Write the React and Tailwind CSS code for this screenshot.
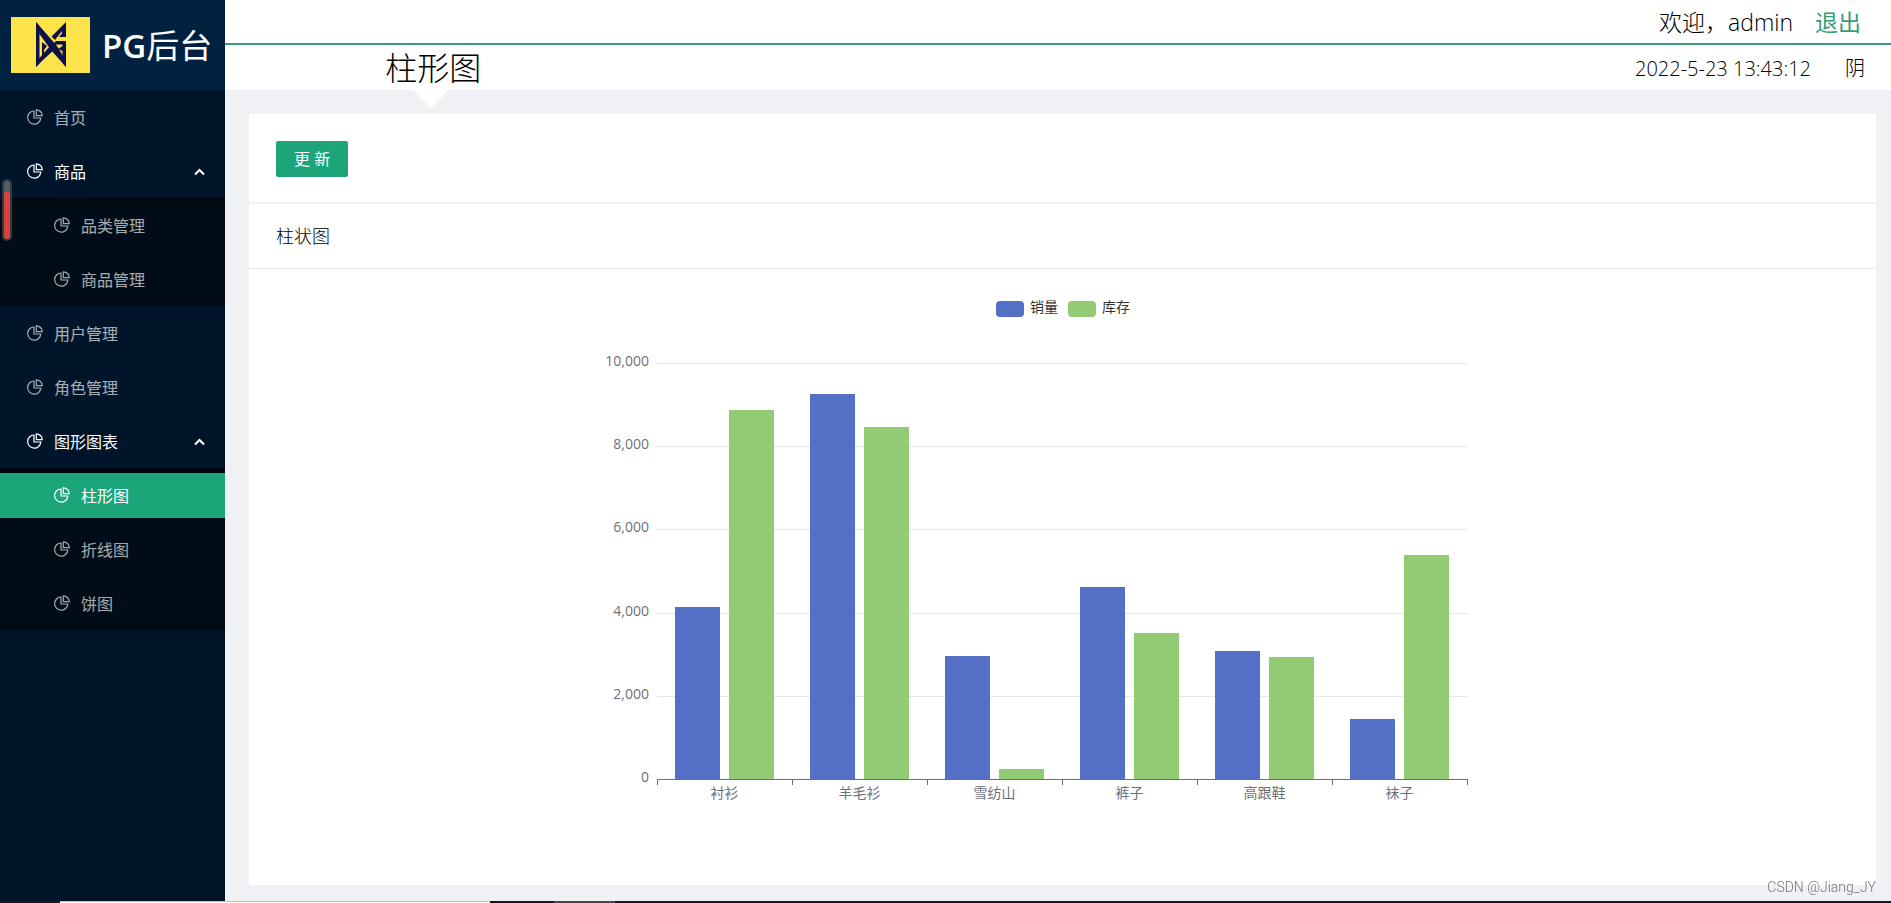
import { useState } from "react";
import clsx from "clsx";

const MENU = [
  { key: "home", title: "首页" },
  {
    key: "products",
    title: "商品",
    children: [
      { key: "category", title: "品类管理" },
      { key: "product", title: "商品管理" },
    ],
  },
  { key: "user", title: "用户管理" },
  { key: "role", title: "角色管理" },
  {
    key: "charts",
    title: "图形图表",
    children: [
      { key: "bar", title: "柱形图" },
      { key: "line", title: "折线图" },
      { key: "pie", title: "饼图" },
    ],
  },
];

const SALES = [4144, 9250, 2957, 4615, 3077, 1432];
const STORES = [8863, 8454, 233, 3510, 2940, 5375];
const NAMES = ["衬衫", "羊毛衫", "雪纺山", "裤子", "高跟鞋", "袜子"];
const TICKS = [0, 2000, 4000, 6000, 8000, 10000];

// chart geometry
const GRID = { left: 101, top: 67, width: 810, height: 416 };
const STEP = GRID.width / NAMES.length;
const BASE = GRID.top + GRID.height;

function yOf(value) {
  return Math.round(BASE - (value / 10000) * GRID.height);
}

function Logo() {
  return (
    <svg viewBox="0 0 79 56" className="h-14 w-[79px] shrink-0 bg-[#fee34a]" aria-hidden="true">
      <g fill="#0d1149">
        <path d="M25 5 L28.5 9 V46 L25 50 Z" />
        <path d="M25 5 L46 29 L55 44 V50 L40 33 L27 15 Z" />
        <path d="M25 50 V45 L39 29 L43 33 L32 43 Z" />
        <path d="M31 25 L36 29 L33 33 V37 L31 39 Z" />
        <path d="M55 5 V20 H48 L51 16.5 V14 L44 23 L40.5 19.5 Z" />
        <path d="M45 24 H55 V50 L51.5 46 V34 L47 32 L51.5 29 V27.5 H45 L42 30 L41 28 Z" />
      </g>
    </svg>
  );
}

function PieIcon() {
  return (
    <svg
      viewBox="0 0 16 16"
      className="-mt-0.5 size-4 shrink-0"
      fill="none"
      stroke="currentColor"
      strokeWidth="1.2"
      aria-hidden="true"
    >
      <path d="M7 2 A6.6 6.6 0 1 0 13.8 9 H7 Z" />
      <path d="M9.3 0.8 V6.7 H15.3 A6 6 0 0 0 9.3 0.8 Z" />
    </svg>
  );
}

function MenuLink({ item, nested, active, onSelect }) {
  return (
    <li className="pt-[5px] pb-1">
      <a
        href={`#${item.key}`}
        onClick={() => onSelect(item)}
        className={clsx(
          "flex h-[45px] items-center gap-[11px]",
          nested ? "pl-[54px]" : "pl-[27px]",
          active ? "bg-[#1da57a] text-white" : "text-white/65 hover:text-white"
        )}
      >
        <PieIcon />
        <span>{item.title}</span>
      </a>
    </li>
  );
}

function SubMenu({ item, open, selected, onToggle, onSelect }) {
  return (
    <li>
      <div className="pt-[5px] pb-1">
        <button
          type="button"
          aria-expanded={open}
          onClick={() => onToggle(item.key)}
          className="flex h-[45px] w-full items-center gap-[11px] pr-5 pl-[27px] text-white"
        >
          <PieIcon />
          <span>{item.title}</span>
          <svg
            viewBox="0 0 11 8"
            className={clsx("ml-auto h-2 w-[11px]", !open && "rotate-180")}
            fill="none"
            stroke="currentColor"
            strokeWidth="2"
            aria-hidden="true"
          >
            <path d="M1 6.5 L5.5 2 L10 6.5" />
          </svg>
        </button>
      </div>
      {open && (
        <ul className="bg-[#000c17] shadow-[inset_0_8px_6px_-6px_rgba(0,0,0,0.45),inset_0_-6px_6px_-6px_rgba(0,0,0,0.45)]">
          {item.children.map((child) => (
            <MenuLink
              key={child.key}
              item={child}
              nested
              active={selected === child.key}
              onSelect={onSelect}
            />
          ))}
        </ul>
      )}
    </li>
  );
}

function BarChart({ sales, stores }) {
  return (
    <svg
      viewBox="0 0 1013 551"
      className="w-full max-w-[1013px]"
      role="img"
      aria-label="柱状图"
      fontSize="14"
    >
      <rect x="440" y="5" width="28" height="16" rx="4" fill="#5470c6" />
      <text x="474" y="16" fill="#333">销量</text>
      <rect x="512" y="5" width="28" height="16" rx="4" fill="#91cc75" />
      <text x="546" y="16" fill="#333">库存</text>

      {TICKS.map((tick) => (
        <g key={tick}>
          {tick > 0 && (
            <path
              d={`M${GRID.left} ${yOf(tick) + 0.5} h${GRID.width + 1}`}
              stroke="#e5e7ee"
            />
          )}
          <text x={GRID.left - 8} y={yOf(tick) + 3} textAnchor="end" fill="#6e7079">
            {tick.toLocaleString("en-US")}
          </text>
        </g>
      ))}

      {NAMES.map((name, i) => {
        const x = GRID.left + i * STEP;
        return (
          <g key={name}>
            <rect x={x + 18} y={yOf(sales[i])} width="45" height={BASE - yOf(sales[i])} fill="#5470c6" />
            <rect x={x + 72} y={yOf(stores[i])} width="45" height={BASE - yOf(stores[i])} fill="#91cc75" />
            <text x={x + STEP / 2} y={BASE + 19} textAnchor="middle" fill="#6e7079">
              {name}
            </text>
          </g>
        );
      })}

      <g stroke="#6e7079" fill="none">
        <path d={`M${GRID.left} ${BASE + 0.5} h${GRID.width + 1}`} />
        {[...NAMES, "end"].map((name, i) => (
          <path key={name} d={`M${GRID.left + i * STEP + 0.5} ${BASE} v6`} />
        ))}
      </g>
    </svg>
  );
}

export default function App() {
  const [selected, setSelected] = useState("bar");
  const [title, setTitle] = useState("柱形图");
  const [openKeys, setOpenKeys] = useState(["products", "charts"]);
  const [sales, setSales] = useState(SALES);
  const [stores, setStores] = useState(STORES);

  function handleSelect(item) {
    setSelected(item.key);
    setTitle(item.title);
  }

  function handleToggle(key) {
    setOpenKeys((keys) =>
      keys.includes(key) ? keys.filter((k) => k !== key) : [...keys, key]
    );
  }

  function update() {
    setSales((values) => values.map((v) => Math.min(v + 100, 10000)));
    setStores((values) => values.map((v) => Math.max(v - 100, 0)));
  }

  return (
    <div className="flex h-screen flex-col font-['Open_Sans','Noto_Sans_CJK_SC',sans-serif] text-base text-black/85">
      <div className="flex min-h-0 flex-1">
        <aside className="w-[225px] shrink-0 overflow-hidden bg-[#001529]">
          <a href="#home" className="flex h-[90px] items-center gap-3 bg-[#002140] pl-[11px] text-white">
            <Logo />
            <h1 className="text-[33px] leading-none whitespace-nowrap">
              <span className="font-semibold">PG</span>后台
            </h1>
          </a>
          <nav>
            <ul>
              {MENU.map((item) =>
                item.children ? (
                  <SubMenu
                    key={item.key}
                    item={item}
                    open={openKeys.includes(item.key)}
                    selected={selected}
                    onToggle={handleToggle}
                    onSelect={handleSelect}
                  />
                ) : (
                  <MenuLink
                    key={item.key}
                    item={item}
                    active={selected === item.key}
                    onSelect={handleSelect}
                  />
                )
              )}
            </ul>
          </nav>
        </aside>

        <div className="flex min-w-0 flex-1 flex-col bg-[#f0f1f5]">
          <header className="h-[90px] bg-white font-light text-black">
            <div className="flex h-[45px] items-center justify-end gap-[22px] border-b-2 border-[#3a9c7b] pt-0.5 pr-[30px] text-[23px] leading-none">
              <span>欢迎，admin</span>
              <button type="button" className="font-normal text-[#3a9c7b]">退出</button>
            </div>
            <div className="flex h-[45px] items-center">
              <div className="relative flex h-full w-1/4 items-center justify-center text-[32px] leading-none">
                <h2>{title}</h2>
                <span className="absolute top-full left-1/2 -ml-5 border-x-[18px] border-t-[18px] border-x-transparent border-t-white" />
              </div>
              <div className="flex flex-1 justify-end gap-[34px] pt-0.5 pr-[26px] text-xl">
                <span>2022-5-23 13:43:12</span>
                <span>阴</span>
              </div>
            </div>
          </header>

          <main className="flex min-h-0 flex-1 flex-col pt-6 pr-[15px] pb-4 pl-6">
            <section className="mb-0.5 bg-white px-[27px] pt-[27px] pb-[25px]">
              <button
                type="button"
                onClick={update}
                className="h-9 rounded-xs bg-[#1da57a] px-[18px] leading-none text-white"
              >
                更 新
              </button>
            </section>
            <section className="flex min-h-0 flex-1 flex-col bg-white">
              <h3 className="flex h-[65px] items-center border-b border-[#e8e8e8] px-[27px] text-lg font-light text-black">
                柱状图
              </h3>
              <div className="flex justify-center px-[27px] pt-[27px]">
                <BarChart sales={sales} stores={stores} />
              </div>
            </section>
          </main>
        </div>
      </div>

      <div className="flex h-0.5 shrink-0 bg-[#14171f]">
        <span className="w-[60px] bg-[#0f1c2b]" />
        <span className="w-[430px] border-t border-[#c0c0c0] bg-white" />
        <span className="w-16" />
        <span className="w-[61px] bg-[#45484c]" />
      </div>

      <div className="fixed top-[179px] left-0.5 flex h-[62px] w-2.5 items-end rounded-full border-2 border-[#333b40] bg-[#555d66]">
        <span className="h-12 w-full rounded-full bg-[#d9413f]" />
      </div>
      <span className="fixed right-[15px] bottom-1.5 font-['Roboto',sans-serif] text-sm font-light text-[#777]">
        CSDN @Jiang_JY
      </span>
    </div>
  );
}
